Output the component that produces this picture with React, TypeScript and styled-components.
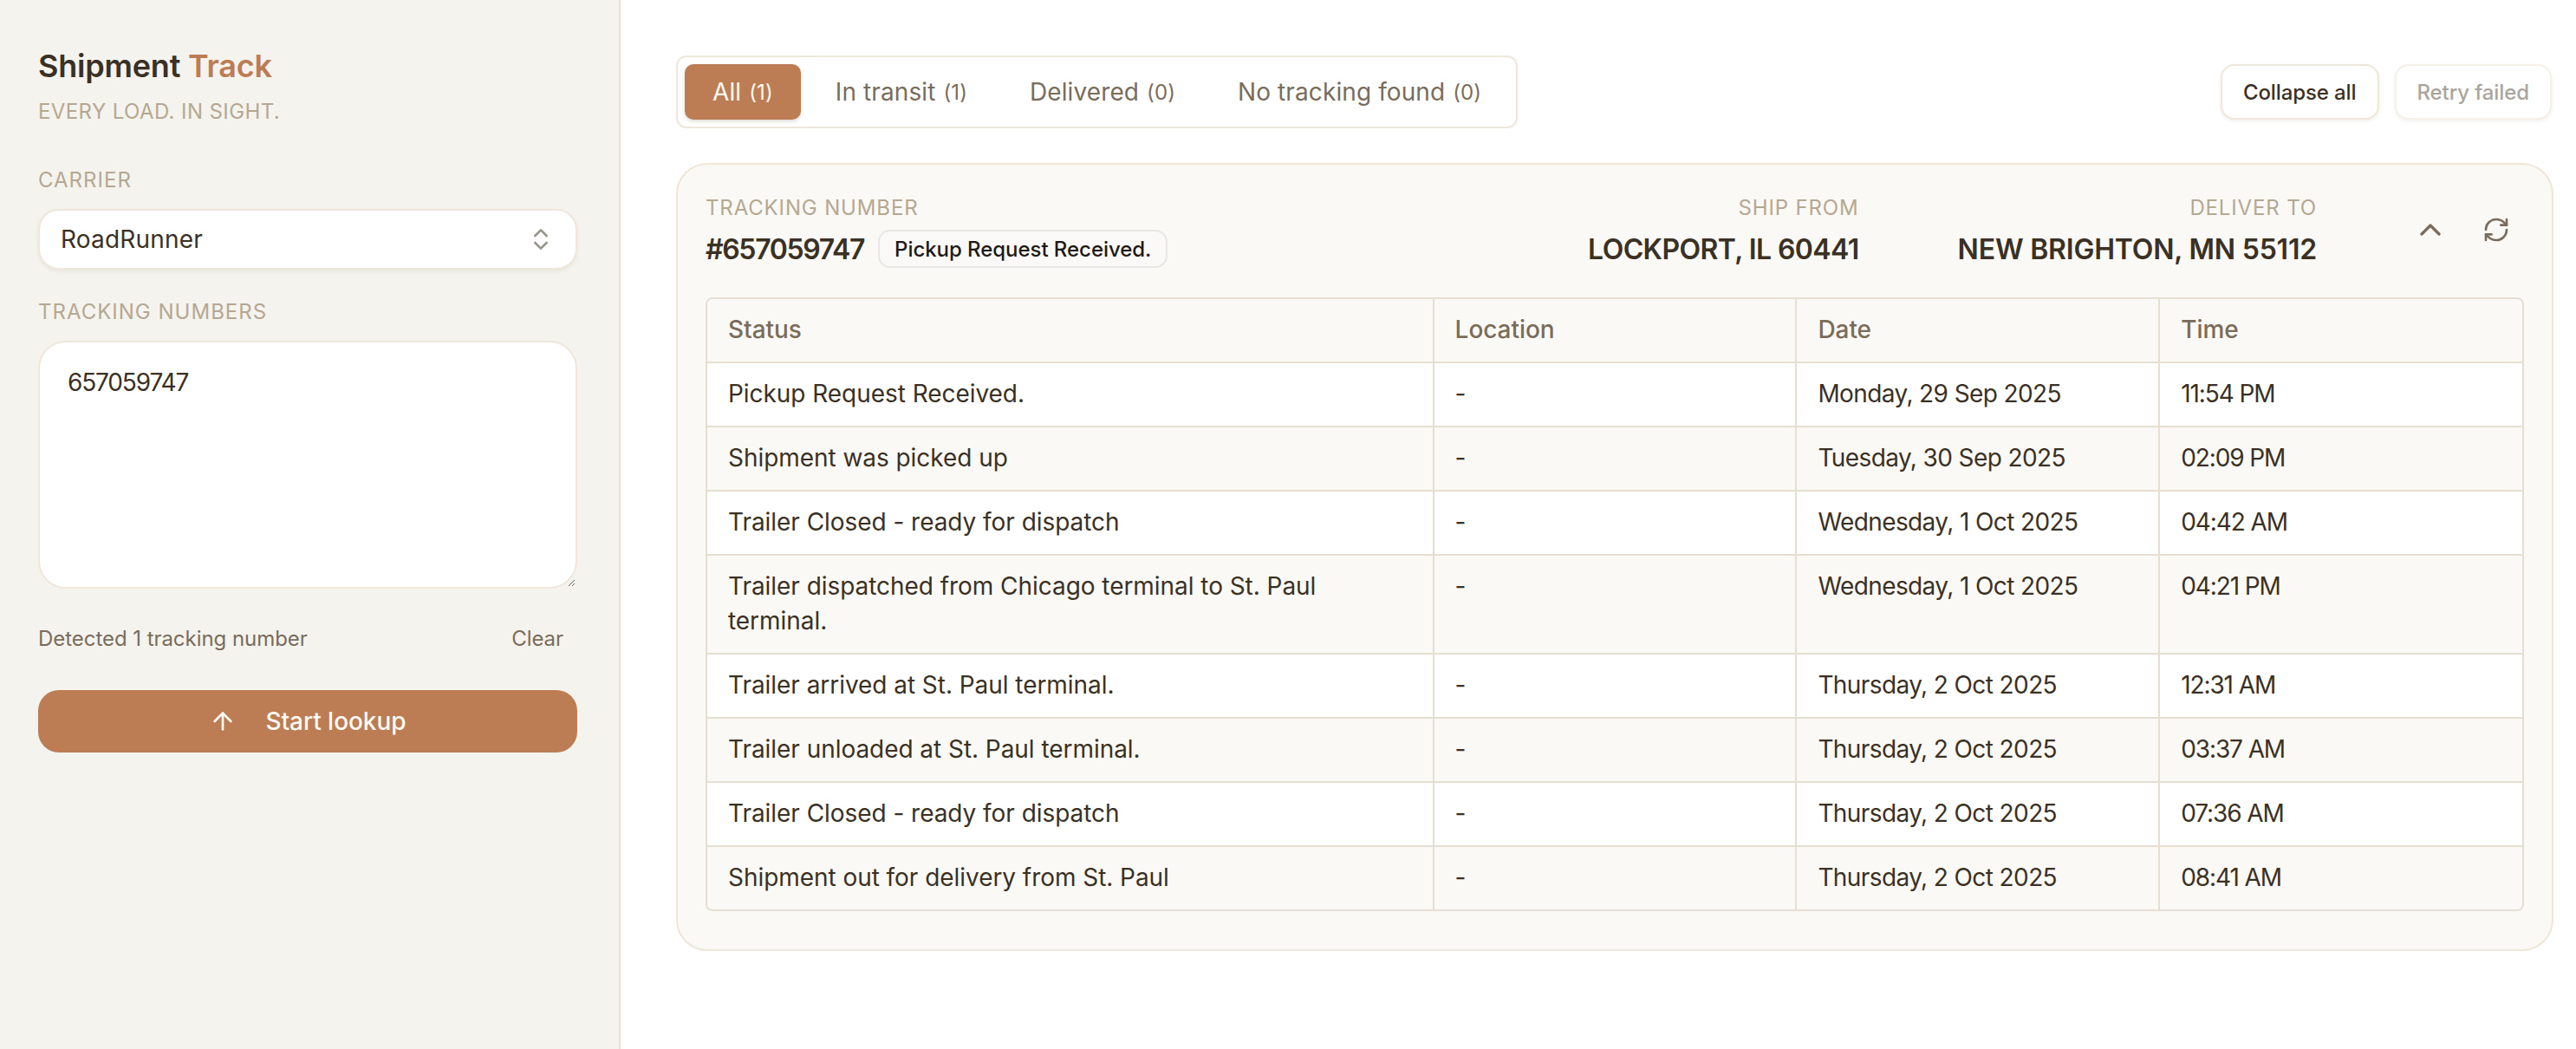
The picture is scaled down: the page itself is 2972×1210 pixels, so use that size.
import { ArrowUp, ChevronUp, ChevronsUpDown, RefreshCw } from "lucide-react"
import { styled, createGlobalStyle } from "styled-components"

const GlobalStyle = createGlobalStyle`
  * { box-sizing: border-box; }
  html, body { margin: 0; background: #fff; }
  body {
    font-family: Inter, "Liberation Sans", sans-serif;
    color: #3a3124;
    -webkit-font-smoothing: antialiased;
  }
`

const Page = styled.div`
  display: flex;
  min-height: 1210px;
`

const Sidebar = styled.aside`
  width: 716px;
  flex-shrink: 0;
  background: #f5f3ee;
  border-right: 2px solid #e8dfcf;
  padding: 58px 48px 0 44px;
  display: flex;
  flex-direction: column;
`

const Title = styled.h1`
  margin: 0;
  font-size: 36px;
  line-height: 36px;
  font-weight: 600;
  letter-spacing: -0.2px;
`

const Accent = styled.span`
  color: #bc7d54;
`

const Tagline = styled.p`
  margin: 19px 0 0;
  font-size: 24px;
  line-height: 32px;
  letter-spacing: 0.4px;
  color: #b5a893;
`

const FieldLabel = styled.label<{ $top: number }>`
  display: block;
  margin-top: ${({ $top }) => $top}px;
  font-size: 24px;
  line-height: 32px;
  letter-spacing: 1px;
  color: #b5a893;
`

const SelectBox = styled.div`
  margin-top: 17px;
  height: 70px;
  background: #fff;
  border: 2px solid #efe7db;
  border-radius: 24px;
  box-shadow: 0 2px 4px rgba(90, 70, 40, 0.08);
  display: flex;
  align-items: center;
  justify-content: space-between;
  padding: 0 24px;
  font-size: 28px;
  letter-spacing: 0.2px;
`

const SelectIcon = styled(ChevronsUpDown)`
  color: #98948d;
`

const TrackingInput = styled.textarea`
  display: block;
  width: 100%;
  height: 286px;
  margin-top: 17px;
  background: #fff;
  border: 2px solid #efe7db;
  border-radius: 32px;
  padding: 26px 32px;
  font-family: inherit;
  font-size: 28px;
  line-height: 40px;
  letter-spacing: -1.15px;
  color: #3a3124;
  outline: none;
  resize: vertical;
`

const HelperRow = styled.div`
  display: flex;
  justify-content: space-between;
  align-items: center;
  margin-top: 42px;
  padding-right: 16px;
  font-size: 24px;
  line-height: 32px;
  letter-spacing: -0.05px;
  color: #7a6c5b;
`

const ClearButton = styled.button`
  border: none;
  background: none;
  padding: 0;
  font: inherit;
  color: inherit;
  letter-spacing: inherit;
`

const LookupButton = styled.button`
  margin-top: 43px;
  height: 72px;
  border: none;
  border-radius: 24px;
  background: #bc7d54;
  color: #fdf9f3;
  font-family: inherit;
  font-size: 28px;
  font-weight: 500;
  letter-spacing: -0.05px;
  display: flex;
  align-items: center;
  justify-content: center;
  gap: 33px;
`

const Main = styled.main`
  flex: 1;
  min-width: 0;
  padding: 64px 26px 0 64px;
`

const Toolbar = styled.div`
  display: flex;
  justify-content: space-between;
  align-items: flex-start;
`

const TabList = styled.div`
  display: flex;
  gap: 8px;
  padding: 8px;
  height: 84px;
  background: #fff;
  border: 2px solid #efe7db;
  border-radius: 12px;
`

const Tab = styled.button<{ $active?: boolean }>`
  border: none;
  padding: 0 32px;
  border-radius: 10px;
  font-family: inherit;
  font-size: 28px;
  letter-spacing: 0.1px;
  display: flex;
  align-items: center;
  gap: 9px;
  color: ${({ $active }) => ($active ? "#fdf9f3" : "#7a6c5b")};
  background: ${({ $active }) => ($active ? "#bc7d54" : "transparent")};
  box-shadow: ${({ $active }) => ($active ? "0 2px 4px rgba(90, 70, 40, 0.2)" : "none")};
`

const TabCount = styled.span`
  font-size: 24px;
`

const ToolbarActions = styled.div`
  display: flex;
  gap: 18px;
  margin: 10px 2px 0 0;
`

const ActionButton = styled.button<{ $disabled?: boolean }>`
  height: 64px;
  padding: 0 24px;
  background: #fff;
  border: 2px solid ${({ $disabled }) => ($disabled ? "#f5f0e8" : "#efe7db")};
  border-radius: 16px;
  font-family: inherit;
  font-size: 24px;
  font-weight: 500;
  letter-spacing: -0.1px;
  color: ${({ $disabled }) => ($disabled ? "#a9a59d" : "#3a3124")};
  box-shadow: 0 2px 4px rgba(90, 70, 40, 0.08);
`

const Card = styled.section`
  margin-top: 40px;
  padding: 32px;
  padding-bottom: 44px;
  background: #fbf9f6;
  border: 2px solid #efe6d8;
  border-radius: 36px;
`

const CardHeader = styled.header`
  display: flex;
  align-items: flex-start;
  height: 121px;
`

const HeaderBlock = styled.div<{ $right?: boolean; $grow?: boolean }>`
  display: flex;
  flex-direction: column;
  align-items: ${({ $right }) => ($right ? "flex-end" : "flex-start")};
  flex-grow: ${({ $grow }) => ($grow ? 1 : 0)};
  margin: 2px 0 0 ${({ $right, $grow }) => ($right && !$grow ? "114px" : "0")};
`

const HeaderLabel = styled.span`
  font-size: 24px;
  line-height: 32px;
  letter-spacing: 0.85px;
  color: #b5a893;
`

const HeaderValueRow = styled.div`
  display: flex;
  align-items: center;
  gap: 16px;
  margin-top: 8px;
  height: 46px;
`

const TrackingValue = styled.span`
  font-size: 32px;
  font-weight: 600;
  letter-spacing: -1.35px;
`

const RouteValue = styled.span<{ $tracking: number }>`
  font-size: 32px;
  font-weight: 600;
  letter-spacing: ${({ $tracking }) => $tracking}px;
  white-space: nowrap;
`

const StatusBadge = styled.span`
  padding: 0 17px;
  height: 44px;
  display: flex;
  align-items: center;
  background: #faf9f7;
  border: 2px solid #e9e7e3;
  border-radius: 14px;
  font-size: 24px;
  font-weight: 500;
  letter-spacing: -0.05px;
  color: #1f1a14;
`

const IconGroup = styled.div`
  display: flex;
  align-items: center;
  gap: 40px;
  margin: 23px 16px 0 111px;
  height: 40px;
  color: #7a6c5b;
`

const TableFrame = styled.div`
  border: 2px solid #e6dfd1;
  border-radius: 8px;
  overflow: hidden;
`

const Table = styled.table`
  width: 100%;
  border-collapse: collapse;
  table-layout: fixed;
  font-size: 28px;
  line-height: 40px;
  letter-spacing: -0.05px;
`

const HeadCell = styled.th<{ $wide?: boolean }>`
  width: ${({ $wide }) => ($wide ? "40%" : "20%")};
  padding: 15px 24px 17px;
  text-align: left;
  font-weight: 500;
  color: #7a6c5b;
  background: #fbf9f6;
  border-bottom: 2px solid #e6dfd1;
  border-left: 2px solid #e6dfd1;
  &:first-child { border-left: none; }
`

const Row = styled.tr`
  background: #fff;
  &:nth-child(even) { background: #fbf9f6; }
  &:last-child td { border-bottom: none; }
`

const Cell = styled.td<{ $tracking?: number }>`
  padding: 15px 24px 17px;
  vertical-align: top;
  letter-spacing: ${({ $tracking }) => $tracking ?? -0.05}px;
  border-bottom: 2px solid #e6dfd1;
  border-left: 2px solid #e6dfd1;
  &:first-child { border-left: none; }
`

const events = [
  ["Pickup Request Received.", "Monday, 29 Sep 2025", "11:54 PM"],
  ["Shipment was picked up", "Tuesday, 30 Sep 2025", "02:09 PM"],
  ["Trailer Closed - ready for dispatch", "Wednesday, 1 Oct 2025", "04:42 AM"],
  ["Trailer dispatched from Chicago terminal to St. Paul terminal.", "Wednesday, 1 Oct 2025", "04:21 PM"],
  ["Trailer arrived at St. Paul terminal.", "Thursday, 2 Oct 2025", "12:31 AM"],
  ["Trailer unloaded at St. Paul terminal.", "Thursday, 2 Oct 2025", "03:37 AM"],
  ["Trailer Closed - ready for dispatch", "Thursday, 2 Oct 2025", "07:36 AM"],
  ["Shipment out for delivery from St. Paul", "Thursday, 2 Oct 2025", "08:41 AM"],
]

const tabs = [
  { name: "All", count: 1 },
  { name: "In transit", count: 1 },
  { name: "Delivered", count: 0 },
  { name: "No tracking found", count: 0 },
]

export default function App() {
  return (
    <Page>
      <GlobalStyle />
      <Sidebar>
        <Title>Shipment <Accent>Track</Accent></Title>
        <Tagline>EVERY LOAD. IN SIGHT.</Tagline>
        <FieldLabel $top={47}>CARRIER</FieldLabel>
        <SelectBox>
          RoadRunner
          <SelectIcon size={32} strokeWidth={2} />
        </SelectBox>
        <FieldLabel $top={33}>TRACKING NUMBERS</FieldLabel>
        <TrackingInput defaultValue="657059747" />
        <HelperRow>
          <span>Detected 1 tracking number</span>
          <ClearButton>Clear</ClearButton>
        </HelperRow>
        <LookupButton>
          <ArrowUp size={32} strokeWidth={2} />
          Start lookup
        </LookupButton>
      </Sidebar>
      <Main>
        <Toolbar>
          <TabList>
            {tabs.map((tab, index) => (
              <Tab key={tab.name} $active={index === 0}>
                {tab.name} <TabCount>({tab.count})</TabCount>
              </Tab>
            ))}
          </TabList>
          <ToolbarActions>
            <ActionButton>Collapse all</ActionButton>
            <ActionButton $disabled>Retry failed</ActionButton>
          </ToolbarActions>
        </Toolbar>
        <Card>
          <CardHeader>
            <HeaderBlock $grow>
              <HeaderLabel>TRACKING NUMBER</HeaderLabel>
              <HeaderValueRow>
                <TrackingValue>#657059747</TrackingValue>
                <StatusBadge>Pickup Request Received.</StatusBadge>
              </HeaderValueRow>
            </HeaderBlock>
            <HeaderBlock $right>
              <HeaderLabel>SHIP FROM</HeaderLabel>
              <HeaderValueRow><RouteValue $tracking={-0.6}>LOCKPORT, IL 60441</RouteValue></HeaderValueRow>
            </HeaderBlock>
            <HeaderBlock $right>
              <HeaderLabel>DELIVER TO</HeaderLabel>
              <HeaderValueRow><RouteValue $tracking={-0.2}>NEW BRIGHTON, MN 55112</RouteValue></HeaderValueRow>
            </HeaderBlock>
            <IconGroup>
              <ChevronUp size={40} strokeWidth={2} />
              <RefreshCw size={32} strokeWidth={2} />
            </IconGroup>
          </CardHeader>
          <TableFrame>
            <Table>
              <thead>
                <tr>
                  <HeadCell $wide>Status</HeadCell>
                  <HeadCell>Location</HeadCell>
                  <HeadCell>Date</HeadCell>
                  <HeadCell>Time</HeadCell>
                </tr>
              </thead>
              <tbody>
                {events.map((event, index) => (
                  <Row key={index}>
                    <Cell>{event[0]}</Cell>
                    <Cell>-</Cell>
                    <Cell $tracking={-0.6}>{event[1]}</Cell>
                    <Cell $tracking={-1.1}>{event[2]}</Cell>
                  </Row>
                ))}
              </tbody>
            </Table>
          </TableFrame>
        </Card>
      </Main>
    </Page>
  )
}
